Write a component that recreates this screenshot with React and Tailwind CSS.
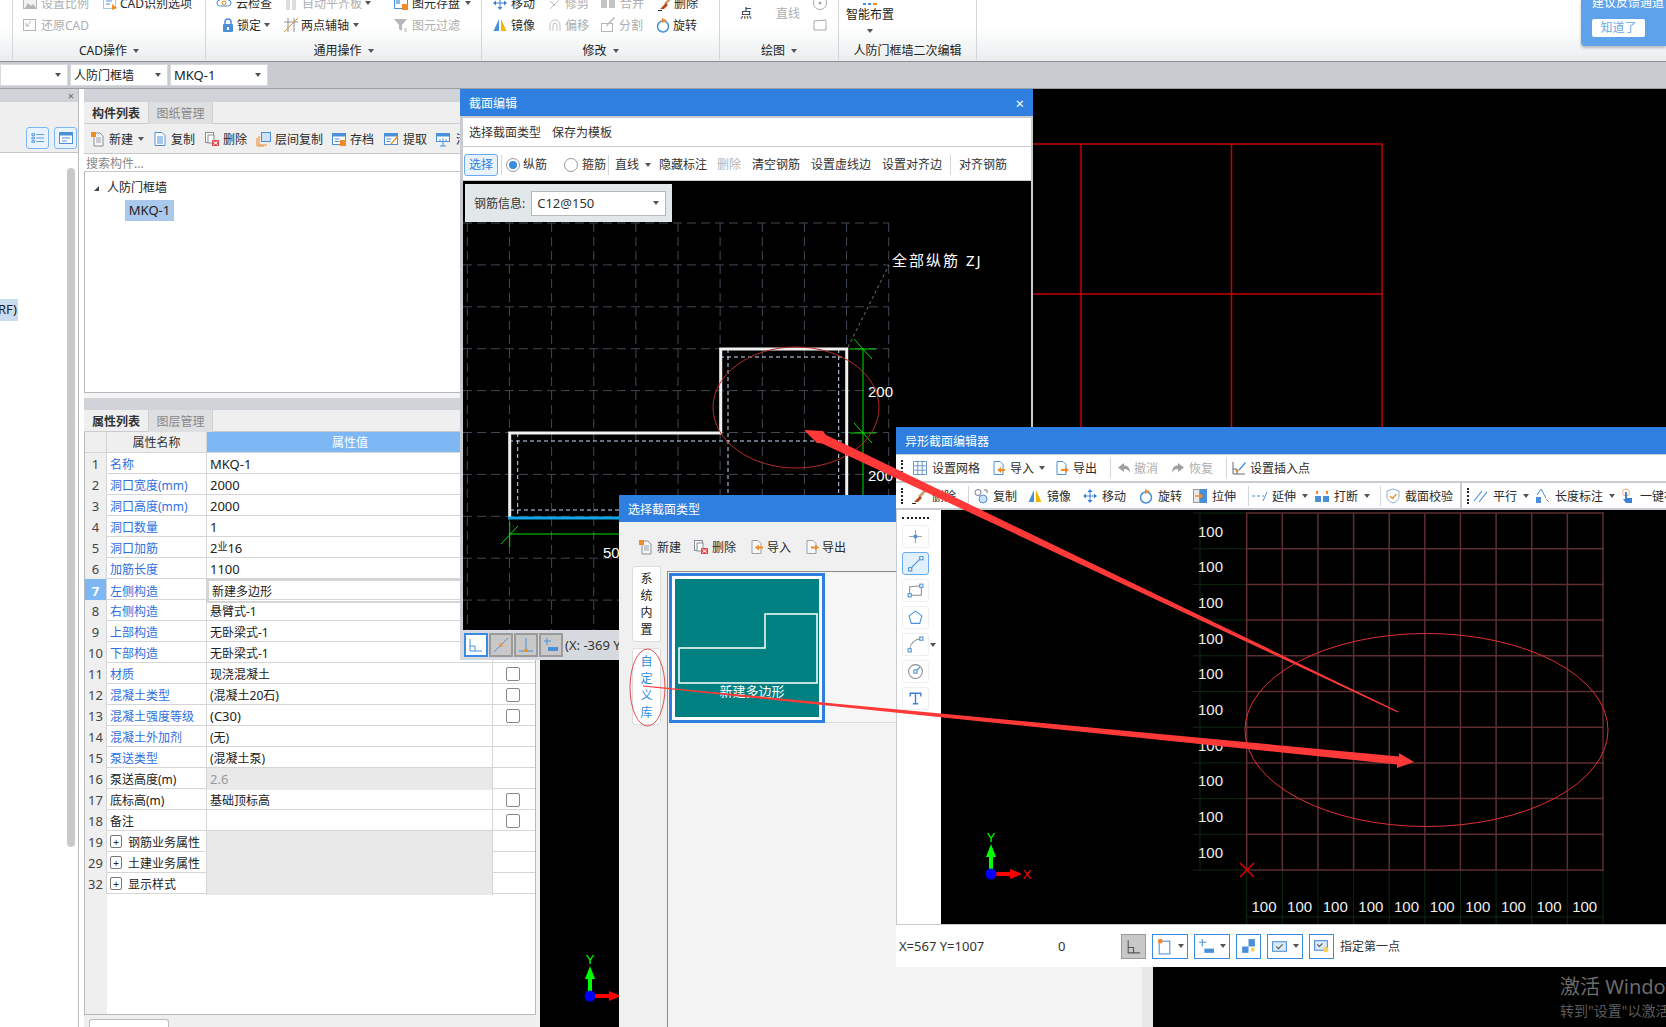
import React from 'react';

const BLUE = '#4a90d9';
const ORG = '#f08c28';

const ICONS = {
  new: <><path d="M4 2h6l3 3v10H4z" fill="#f6f7f8" stroke="#8a8f96" /><path d="M6 7h5M6 9h5M6 11h5" stroke="#9aa0a6" /><rect x="1" y="1" width="5" height="5" fill={ORG} /></>,
  copy: <><path d="M2 1.5h7l3 3v10H2z" fill="#fff" stroke={BLUE} /><path d="M4 6h6M4 8h6M4 10h6M4 12h6" stroke={BLUE} /></>,
  del: <><rect x="1.5" y="1.5" width="8" height="10" fill="#fff" stroke="#8a8f96" /><rect x="4" y="4" width="6" height="8" fill="#fff" stroke="#8a8f96" /><rect x="8" y="9" width="7" height="6" fill="#e05050" /><path d="M9.5 10.5l4 3m0-3l-4 3" stroke="#fff" /></>,
  layer: <><rect x="5.5" y="1.5" width="9" height="9" fill="#cfe2f7" stroke={BLUE} /><path d="M3 5v9h8" fill="none" stroke={ORG} /><path d="M1 7v8h7" fill="none" stroke={ORG} /></>,
  save: <><rect x="1.5" y="2.5" width="13" height="11" fill="#fff" stroke={BLUE} /><rect x="1.5" y="2.5" width="13" height="3" fill={BLUE} /><path d="M3.5 8h5M3.5 10.5h5" stroke={BLUE} /><rect x="9" y="9" width="6" height="6" fill={ORG} /></>,
  extract: <><rect x="1.5" y="2.5" width="13" height="11" fill="#fff" stroke={BLUE} /><rect x="1.5" y="2.5" width="13" height="3" fill={BLUE} /><path d="M3.5 8h5M3.5 10.5h4" stroke={BLUE} /><path d="M15 6l-6 7-2 1 1-2 6-7z" fill={ORG} /></>,
  clean: <><rect x="1.5" y="2.5" width="13" height="8" fill="#fff" stroke={BLUE} /><rect x="1.5" y="2.5" width="13" height="3" fill={BLUE} /><path d="M8 7v8M5 15h6M5 8v3M11 8v3" stroke={BLUE} /></>,
  imp: <><path d="M3 1.5h6l3 3v10H3z" fill="#fff" stroke={BLUE} /><path d="M6 10l4-3v2h4v2h-4v2z" fill={ORG} /></>,
  exp: <><path d="M3 1.5h6l3 3v10H3z" fill="#fff" stroke={BLUE} /><path d="M15 10l-4-3v2H7v2h4v2z" fill={ORG} /></>,
  imp2: <><path d="M3 1.5h6l3 3v10H3z" fill="#f6f7f8" stroke="#9aa0a6" /><path d="M6 8.5l4-3v2h4v2h-4v2z" fill={ORG} /></>,
  exp2: <><path d="M3 1.5h6l3 3v10H3z" fill="#f6f7f8" stroke="#9aa0a6" /><path d="M15 8.5l-4-3v2H7v2h4v2z" fill={ORG} /></>,
  grid: <path d="M1.5 1.5h13v13h-13zM1.5 5.8h13M1.5 10.2h13M5.8 1.5v13M10.2 1.5v13" fill="none" stroke="#6f9bc8" />,
  undo: <path d="M8 3L2 7.5l6 4.5V9c3 0 5 1 6 4 0-5-2-7.5-6-7.5z" fill="#a0a0a0" />,
  redo: <path d="M8 3l6 4.5-6 4.5V9c-3 0-5 1-6 4 0-5 2-7.5 6-7.5z" fill="#a0a0a0" />,
  insert: <><path d="M2 2v12h12M2 9h4M6 9v5" fill="none" stroke="#667" /><path d="M14 2l-6 7-1 2 2-1 6-7z" fill={BLUE} /><circle cx="6" cy="11" r="1.5" fill={ORG} /></>,
  broom: <><path d="M15 1L7 9" stroke="#c9a06a" strokeWidth="2.5" /><path d="M8 8l2 2-4 4-4 0z" fill="#b5471a" /><path d="M0 15.5h4" stroke="#222" /></>,
  copy2: <><circle cx="5" cy="4.5" r="3" fill="#fff" stroke="#778" /><circle cx="10" cy="11" r="4" fill="#cfe2f7" stroke={BLUE} /><path d="M11 2h3v3" fill="none" stroke="#778" /></>,
  mirror: <><path d="M7 2v12H1.5z" fill={BLUE} /><path d="M9 2v12h5.5z" fill="#f5b400" /></>,
  move: <path d="M8 1l2.5 3h-5zM8 15l2.5-3h-5zM1 8l3-2.5v5zM15 8l-3-2.5v5zM7.5 4h1v8h-1zM4 7.5h8v1H4z" fill="#3a80d8" />,
  rotate: <><circle cx="8" cy="9.5" r="5.5" fill="none" stroke={BLUE} strokeWidth="1.5" /><path d="M7 1l5 2.5L7 6z" fill={ORG} /></>,
  stretch: <><rect x="1.5" y="1.5" width="6" height="13" fill="#e8e8e8" stroke="#999" /><rect x="8" y="1" width="7" height="14" fill={BLUE} /><path d="M3 8h6M7 5.5L10 8l-3 2.5" fill="none" stroke={ORG} strokeWidth="1.5" /></>,
  extend: <path d="M0 8h3M5 8h3M10 8h2M11 13l4-9" fill="none" stroke={BLUE} />,
  brk: <><rect x="1" y="8" width="6" height="6" fill={BLUE} /><rect x="9" y="8" width="6" height="6" fill={BLUE} /><path d="M3 6V3M13 6V3" stroke={ORG} strokeWidth="2" /></>,
  shield: <><path d="M8 1l6 2v5c0 4-3 6-6 7-3-1-6-3-6-7V3z" fill="#fff" stroke="#8ab0d8" /><path d="M5 8l2.5 2.5L11.5 6" fill="none" stroke={ORG} strokeWidth="1.3" /></>,
  parallel: <path d="M1 13L9 3M6 14l8-10" stroke={BLUE} strokeWidth="1.2" />,
  length: <><path d="M6 1L2 7M6 1l5 9" stroke={BLUE} fill="none" /><rect x="1" y="9" width="5" height="6" fill={BLUE} /><path d="M11 11l3 3" stroke="#888" /></>,
  hand: <><circle cx="6" cy="4.5" r="3.5" fill="none" stroke="#f3a77a" /><path d="M5 4h2v6h5v5H6L3 11l2 0z" fill="#3a80d8" /></>,
  cloud: <><path d="M4 11a3 3 0 0 1 0-6 4 4 0 0 1 8 0 3 3 0 0 1 0 6z" fill="#fff" stroke={BLUE} /><circle cx="8" cy="8" r="2" fill="none" stroke={ORG} /></>,
  lock: <><path d="M5 8V5a3 3 0 0 1 6 0v3" fill="none" stroke={BLUE} strokeWidth="1.5" /><rect x="3" y="7" width="10" height="8" rx="1" fill={BLUE} /><rect x="7" y="10" width="2" height="3" fill="#fff" /></>,
  axis: <><path d="M5 1v14M11 1v14M1 5h14" stroke="#8a8f96" fill="none" /><path d="M1 15L15 1" stroke={ORG} /></>,
  flat: <><rect x="1" y="1" width="4" height="14" fill="#ddd" /><rect x="7" y="3" width="4" height="12" fill="#ddd" /></>,
  store: <><rect x="1.5" y="2.5" width="13" height="11" fill="#fff" stroke={BLUE} /><rect x="3" y="5" width="4" height="4" fill="#8ab8e8" /><rect x="9" y="9" width="6" height="6" fill={ORG} /></>,
  filter: <><path d="M1 2h13L9 8v6L6 12V8z" fill="#b8b8b8" /><path d="M11 12h3M11 14h3" stroke="#b8b8b8" /></>,
  scale: <><rect x="1.5" y="3.5" width="13" height="10" fill="#f2f2f2" stroke="#b5b5b5" /><path d="M3 13l3-5 3 3 2-2 3 4z" fill="#b5b5b5" /></>,
  cad: <><rect x="1.5" y="2.5" width="12" height="11" fill="#fff" stroke="#a8c4e4" /><path d="M4 6h6M4 9h4" stroke={BLUE} /><path d="M10 9l5 4-5 2z" fill={ORG} /></>,
  restore: <><rect x="1.5" y="2.5" width="12" height="11" fill="none" stroke="#b5b5b5" /><path d="M5 9l4-5M7 9H4V6" fill="none" stroke="#b5b5b5" /></>,
  trim: <path d="M2 14L14 2M2 6l5 5" stroke="#c0c0c0" fill="none" />,
  merge: <><rect x="1" y="4" width="6" height="9" fill="#c4c4c4" /><rect x="9" y="4" width="6" height="9" fill="#c4c4c4" /></>,
  offset: <path d="M3 14V8a5 5 0 0 1 10 0v6M6 14V8a2 2 0 0 1 4 0v6" fill="none" stroke="#c0c0c0" />,
  split: <><rect x="1.5" y="6.5" width="11" height="8" fill="none" stroke="#b5b5b5" /><path d="M15 1L8 8l-2 2 1-3 7-7z" fill="#b5b5b5" /></>,
};

const Ico = ({ n, className = 'w-[16px] h-[16px] shrink-0' }) => (
  <svg viewBox="0 0 16 16" className={className}>{ICONS[n]}</svg>
);

const Caret = ({ className = '' }) => (
  <span className={`inline-block w-0 h-0 border-x-[3.5px] border-x-transparent border-t-[4px] border-t-[#555] ${className}`} />
);

const Tool = ({ n, t, w = '', g = 'gap-[4px]', caret, gray }) => (
  <div className={`flex items-center shrink-0 ${g} ${w} ${gray ? 'text-[#aeaeae]' : 'text-[#2b2b2b]'}`}>
    {n && <Ico n={n} />}
    <span className="whitespace-nowrap pt-[2px]">{t}</span>
    {caret && <Caret className="ml-[2px]" />}
  </div>
);

const Sep = ({ w = 'w-[9px]' }) => (
  <div className={`${w} shrink-0 flex justify-center`}>
    <div className="w-px h-[20px] bg-[#d4d7da]" />
  </div>
);

const Grip = ({ w = 'w-[16px]' }) => (
  <div className={`${w} shrink-0 pl-[5px]`}>
    <div className="w-[2px] h-[16px] border-l-2 border-dotted border-[#222]" />
  </div>
);

const RibbonGroup = ({ w, label, noCaret, children }) => (
  <div className={`${w} shrink-0 h-[60px] border-r border-[#d2d6d9] overflow-hidden`}>
    <div className="h-[44px] -mt-[8px]">{children}</div>
    <div className="h-[30px] flex items-center justify-center gap-[6px] text-[#222]">
      <span className="whitespace-nowrap">{label}</span>
      {!noCaret && <Caret />}
    </div>
  </div>
);

const RibRow = ({ pad, children }) => <div className={`h-[22px] flex items-center ${pad}`}>{children}</div>;

const Ribbon = () => (
  <div className="relative h-[62px] shrink-0 flex border-b border-[#8a8f93] bg-gradient-to-b from-white from-[45%] to-[#eaedee]">
    <div className="w-[13px] h-[60px] border-r border-[#d2d6d9] shrink-0" />
    <RibbonGroup w="w-[193px]" label="CAD操作">
      <RibRow pad="pl-[9px]"><Tool n="scale" t="设置比例" w="w-[80px]" g="gap-[3px]" gray /><Tool n="cad" t="CAD识别选项" g="gap-[2px]" /></RibRow>
      <RibRow pad="pl-[9px]"><Tool n="restore" t="还原CAD" g="gap-[3px]" gray /></RibRow>
    </RibbonGroup>
    <RibbonGroup w="w-[276px]" label="通用操作">
      <RibRow pad="pl-[10px]"><Tool n="cloud" t="云检查" w="w-[69px]" /><Tool n="flat" t="自动平齐板" w="w-[108px]" g="gap-[1px]" gray caret /><Tool n="store" t="图元存盘" g="gap-[3px]" caret /></RibRow>
      <RibRow pad="pl-[14px]"><Tool n="lock" t="锁定" w="w-[63px]" g="gap-[1px]" caret /><Tool n="axis" t="两点辅轴" w="w-[110px]" g="gap-[2px]" caret /><Tool n="filter" t="图元过滤" g="gap-[3px]" gray /></RibRow>
    </RibbonGroup>
    <RibbonGroup w="w-[238px]" label="修改">
      <RibRow pad="pl-[10px]"><Tool n="move" t="移动" w="w-[56px]" g="gap-[3px]" /><Tool n="trim" t="修剪" w="w-[52px]" g="gap-[1px]" gray /><Tool n="merge" t="合并" w="w-[58px]" g="gap-[4px]" gray /><Tool n="broom" t="删除" g="gap-0" /></RibRow>
      <RibRow pad="pl-[10px]"><Tool n="mirror" t="镜像" w="w-[55px]" g="gap-[3px]" /><Tool n="offset" t="偏移" w="w-[53px]" g="gap-[2px]" gray /><Tool n="split" t="分割" w="w-[55px]" g="gap-[3px]" gray /><Tool n="rotate" t="旋转" g="gap-[2px]" /></RibRow>
    </RibbonGroup>
    <RibbonGroup w="w-[119px]" label="绘图">
      <div className="h-[44px] flex items-center pl-[20px]">
        <span className="w-[36px] text-[#222]">点</span>
        <span className="w-[36px] text-[#aeaeae]">直线</span>
        <div className="flex flex-col gap-[6px]">
          <svg viewBox="0 0 16 16" className="w-[16px] h-[16px]"><circle cx="8" cy="8" r="6.5" fill="none" stroke="#aaa" /><circle cx="8" cy="8" r="1.5" fill="#aaa" /></svg>
          <svg viewBox="0 0 16 16" className="w-[16px] h-[16px]"><path d="M2 4l12-1v10H2z" fill="none" stroke="#aaa" /></svg>
        </div>
      </div>
    </RibbonGroup>
    <RibbonGroup w="w-[138px]" label="人防门框墙二次编辑" noCaret>
      <div className="h-[44px] flex flex-col pl-[7px] pt-[11px]">
        <div className="h-[2px] w-[48px] flex justify-center gap-[2px]"><span className="w-[3px] h-[2px] bg-[#4a90d9]" /><span className="w-[3px] h-[2px] bg-[#4a90d9]" /><span className="w-[4px] h-[2px] bg-[#f08c28]" /></div>
        <span className="h-[20px] leading-[20px] text-[#222]">智能布置</span>
        <div className="w-[48px] flex justify-center mt-[4px]"><Caret /></div>
      </div>
    </RibbonGroup>
    <div className="absolute right-0 top-0 w-[85px] h-[46px] bg-[#5fa2ec] rounded-bl-[4px] shadow-[0_2px_3px_rgba(0,0,0,0.25)] pl-[11px] overflow-hidden">
      <div className="text-white whitespace-nowrap leading-[12px] -mt-[3px]">建议反馈通道</div>
      <div className="mt-[10px] w-[53px] h-[18px] rounded-[2px] bg-white text-[#6aa8ec] flex items-center justify-center">知道了</div>
    </div>
  </div>
);

const Combo = ({ w, t }) => (
  <div className={`${w} h-[22px] bg-white flex items-center justify-between pl-[3px] pr-[6px] text-[#222] border border-[#d8dadd]`}>
    <span className="whitespace-nowrap pt-[2px]">{t}</span>
    <Caret />
  </div>
);

const TopBar = () => (
  <div className="h-[27px] shrink-0 bg-[#c8ccd1] border-b border-[#999ea3] flex items-center gap-[2px]">
    <Combo w="w-[68px]" t="" />
    <Combo w="w-[98px]" t="人防门框墙" />
    <Combo w="w-[98px]" t={<span className="text-[13px]">MKQ-1</span>} />
  </div>
);

const LeftPanel = () => (
  <div className="w-[78px] shrink-0 flex flex-col bg-white">
    <div className="h-[13px] bg-[#d0d3d8] flex items-center justify-end pr-[4px] text-[#666] text-[11px] leading-none">×</div>
    <div className="h-[22px] bg-[#efefef]" />
    <div className="h-[29px] bg-[#efefef] border-b border-[#c4c6c8] flex items-center justify-end gap-[5px] pr-[1px]">
      <div className="w-[23px] h-[22px] border border-[#7cb6f2] rounded-[3px] bg-[#e9f3fd] flex items-center justify-center">
        <svg viewBox="0 0 16 16" className="w-[14px] h-[14px]"><path d="M1 3h3v2H1zM1 7h3v2H1zM1 11h3v2H1z" fill="none" stroke={BLUE} /><path d="M6 4h9M6 8h9M6 12h9" stroke={BLUE} /></svg>
      </div>
      <div className="w-[23px] h-[22px] border border-[#7cb6f2] rounded-[3px] bg-[#e9f3fd] flex items-center justify-center">
        <svg viewBox="0 0 16 16" className="w-[16px] h-[16px]"><rect x="1.5" y="2.5" width="13" height="11" fill="#fff" stroke={BLUE} /><rect x="1.5" y="2.5" width="13" height="3" fill={BLUE} /><path d="M4 8h8M4 11h5" stroke={BLUE} /></svg>
      </div>
    </div>
    <div className="flex-1 flex">
      <div className="w-[67px] pt-[146px]">
        <div className="w-[18px] h-[22px] bg-[#c9dcf0] text-[#222] flex items-center overflow-hidden"><span className="-ml-[2px] text-[13px]">RF)</span></div>
      </div>
      <div className="w-[8px] h-[679px] mt-[15px] bg-[#c9c9c9] rounded-[4px]" />
    </div>
  </div>
);

const PanelTabs = ({ a, b }) => (
  <div className="h-[22px] bg-[#efefef] flex border-b border-[#c9cbcd]">
    <div className="w-[64px] h-[22px] pt-[2px] flex items-center justify-center font-semibold text-[#333]">{a}</div>
    <div className="w-[65px] h-[22px] pt-[2px] bg-[#dedfe1] flex items-center justify-center text-[#888] border-l border-r border-[#cfd1d3]">{b}</div>
  </div>
);

const LIST_TOOLS = [
  { n: 'new', t: '新建', w: 'w-[63px]', g: 'gap-[3px]', caret: true },
  { n: 'copy', t: '复制', w: 'w-[51px]', g: 'gap-[2px]' },
  { n: 'del', t: '删除', w: 'w-[52px]', g: 'gap-[3px]' },
  { n: 'layer', t: '层间复制', w: 'w-[75px]', g: 'gap-[3px]' },
  { n: 'save', t: '存档', w: 'w-[52px]', g: 'gap-[3px]' },
  { n: 'extract', t: '提取', w: 'w-[52px]', g: 'gap-[4px]' },
  { n: 'clean', t: '清空', w: 'w-[60px]', g: 'gap-[5px]' },
];

const rebar = <>2<span className="text-[10px] -mt-[4px]">业</span>16</>;

const ROWS = [
  ['1', '名称', 'MKQ-1', 0, 1], ['2', '洞口宽度(mm)', '2000', 0, 1], ['3', '洞口高度(mm)', '2000', 0, 1],
  ['4', '洞口数量', '1', 0, 1], ['5', '洞口加筋', rebar, 0, 1], ['6', '加筋长度', '1100', 0, 1],
  ['7', '左侧构造', '新建多边形', 0, 1], ['8', '右侧构造', '悬臂式-1', 0, 1], ['9', '上部构造', '无卧梁式-1', 0, 1],
  ['10', '下部构造', '无卧梁式-1', 0, 1], ['11', '材质', '现浇混凝土', 1, 1], ['12', '混凝土类型', '(混凝土20石)', 1, 1],
  ['13', '混凝土强度等级', '(C30)', 1, 1], ['14', '混凝土外加剂', '(无)', 0, 1], ['15', '泵送类型', '(混凝土泵)', 0, 1],
  ['16', '泵送高度(m)', '2.6', 0, 0], ['17', '底标高(m)', '基础顶标高', 1, 0], ['18', '备注', '', 1, 0],
];

const GROUPS = [['19', '钢筋业务属性'], ['29', '土建业务属性'], ['32', '显示样式']];

const Row = ({ r }) => {
  const [idx, name, value, check, link] = r;
  const sel = idx === '7';
  const off = idx === '16';
  const latin = typeof value === 'string' && /^[\x20-\x7e]*$/.test(value);
  return (
    <div className="grid grid-cols-[22px_100px_286px_41px] h-[21px] border-b border-[#d5d5d5]">
      <div className={`flex items-center justify-center text-[13px] pt-[2px] border-r border-[#d5d5d5] ${sel ? 'bg-[#7db8f5] text-white font-bold' : 'bg-[#efefef] text-[#444]'}`}>{idx}</div>
      <div className={`flex items-center pl-[3px] pt-[2px] border-r border-[#d5d5d5] whitespace-nowrap ${link ? 'text-[#2f6fe0]' : 'text-[#222]'}`}>{name}</div>
      <div className={`flex items-center pl-[3px] pt-[2px] border-r border-[#d5d5d5] whitespace-nowrap ${latin || typeof value !== 'string' ? 'text-[13px]' : ''} ${sel ? 'border-2 border-[#808080] pl-[2px]' : ''} ${off ? 'bg-[#e9e9e9] text-[#999]' : 'text-[#222]'}`}>{value}</div>
      <div className="flex items-center justify-center pr-[2px]">
        {check ? <div className="w-[14px] h-[14px] rounded-[2px] border border-[#888]" /> : null}
      </div>
    </div>
  );
};

const MidPanel = () => (
  <div className="w-[452px] shrink-0 flex flex-col bg-[#f4f4f4]">
    <div className="h-[13px] bg-[#d0d3d8]" />
    <PanelTabs a="构件列表" b="图纸管理" />
    <div className="h-[29px] bg-[#efefef] flex items-center pl-[6px] overflow-hidden">
      {LIST_TOOLS.map((x) => <Tool key={x.t} {...x} />)}
    </div>
    <div className="h-[19px] bg-white border-y border-[#c4c6c8] pl-[2px] pt-[2px] flex items-center text-[#888]">搜索构件...</div>
    <div className="h-[221px] bg-white border-x border-b border-[#b5b7b9] pt-[6px]">
      <div className="flex items-center h-[20px] text-[#222]">
        <span className="ml-[9px] mr-[5px] w-0 h-0 border-l-[5px] border-l-transparent border-b-[5px] border-b-[#444]" />
        <span className="ml-[3px]">人防门框墙</span>
      </div>
      <div className="ml-[40px] mt-[2px] w-[49px] h-[21px] bg-[#a9c8ec] flex items-center justify-center text-[#222] text-[13px]">MKQ-1</div>
    </div>
    <div className="h-[5px]" />
    <div className="h-[12px] bg-[#d0d3d8]" />
    <PanelTabs a="属性列表" b="图层管理" />
    <div className="flex-1 flex flex-col bg-white border-x border-b border-[#b5b7b9]">
      <div className="grid grid-cols-[22px_100px_286px_41px] h-[21px] border-b border-[#d5d5d5]">
        <div className="bg-[#efefef] border-r border-[#d5d5d5]" />
        <div className="bg-[#efefef] flex items-center justify-center pt-[2px] border-r border-[#d5d5d5] text-[#333]">属性名称</div>
        <div className="bg-[#7db8f5] flex items-center justify-center pt-[2px] text-white">属性值</div>
        <div className="bg-[#7db8f5]" />
      </div>
      {ROWS.map((r) => <Row key={r[0]} r={r} />)}
      {GROUPS.map(([i, t]) => (
        <div key={i} className="grid grid-cols-[22px_100px_286px_41px] h-[21px] border-b border-[#d5d5d5]">
          <div className="bg-[#efefef] flex items-center justify-center pt-[2px] text-[13px] border-r border-[#d5d5d5] text-[#444]">{i}</div>
          <div className="flex items-center pl-[3px] gap-[6px] border-r border-[#d5d5d5] text-[#222] whitespace-nowrap">
            <span className="w-[12px] h-[13px] border border-[#777] rounded-[2px] flex items-center justify-center text-[10px] leading-none">+</span>
            <span className="pt-[2px]">{t}</span>
          </div>
          <div className="bg-[#e9e9e9] border-r border-[#d5d5d5]" />
          <div />
        </div>
      ))}
      <div className="flex-1 flex"><div className="w-[22px] bg-[#efefef]" /></div>
    </div>
    <div className="h-[12px] bg-[#efefef] pl-[5px] pt-[4px]">
      <div className="w-[80px] h-[8px] bg-white border border-b-0 border-[#bbb] rounded-t-[3px]" />
    </div>
  </div>
);

// little axis marker used on all the black canvases
const Axis = ({ x, y, showX = true }) => (
  <g>
    <path d={`M${x} ${y}V${y - 22}`} stroke="#00ff00" strokeWidth="4" />
    <path d={`M${x} ${y - 30}l-5 13h10z`} fill="#00ff00" />
    <path d={`M${x} ${y}h22`} stroke="#ff0000" strokeWidth="4" />
    <path d={`M${x + 31} ${y}l-12 -5v10z`} fill="#ff0000" />
    <circle cx={x} cy={y} r="5.5" fill="#0000ff" />
    <text x={x} y={y - 32} textAnchor="middle" fontSize="13" fill="#00ff00" fontFamily="Liberation Sans">Y</text>
    {showX && <text x={x + 36} y={y + 5} textAnchor="middle" fontSize="13" fill="#ff0000" fontFamily="Liberation Sans">X</text>}
  </g>
);

const BackCanvas = () => (
  <svg viewBox="540 89 1126 938" className="flex-1 h-full bg-black block">
    <path d="M1033 144H1382V430M1081 144V430M1231.5 144V430M1033 294H1382" fill="none" stroke="#c80000" strokeWidth="1.5" />
    <Axis x={590} y={996} showX={false} />
    <text x="1560" y="994" fontSize="20" fill="#6b6b6b">激活 Windows</text>
    <text x="1560" y="1016" fontSize="14" fill="#5c5c5c">转到"设置"以激活 Windows。</text>
  </svg>
);

const GX = Array.from({ length: 11 }, (_, i) => 467.3 + 42.14 * i);
const GY = Array.from({ length: 10 }, (_, i) => 223 + 41.9 * i);

const SectionCanvas = () => (
  <svg viewBox="463 181 568 449" className="w-[568px] h-[449px] bg-black block">
    {GX.map((x) => <path key={x} d={`M${x} 223V630`} stroke="#414856" strokeDasharray="9 5" />)}
    {GY.map((y) => <path key={y} d={`M463 ${y}H889`} stroke="#414856" strokeDasharray="9 5" />)}
    <path d="M848 347L889 265" stroke="#777" strokeDasharray="3 3" />
    <path d="M728 349V630M838.7 349V630M720 357H842M509 441H848M517.7 433V518M510 510H850" fill="none" stroke="#c8dcf8" strokeDasharray="4 3" />
    <path d="M509.7 518V433H720.7V349H846.7V630" fill="none" stroke="#f0f0f0" strokeWidth="3" />
    <path d="M508 518H848" stroke="#12a5e8" strokeWidth="3" />
    <path d="M863 349V630M850 349H876M850 433H876M854 339l18 20M854 423l18 20M509.7 534H863M509.7 522V547M501 544l17 -18" fill="none" stroke="#00e000" />
    <text x="892" y="266" fontSize="15" letterSpacing="2" fill="#fff">全部纵筋 ZJ</text>
    <text x="868" y="397" fontSize="15" fill="#fff" fontFamily="Liberation Sans">200</text>
    <text x="868" y="481" fontSize="15" fill="#fff" fontFamily="Liberation Sans">200</text>
    <text x="603" y="558" fontSize="15" fill="#fff" fontFamily="Liberation Sans">500</text>
  </svg>
);

const StatBtn = ({ children, on }) => (
  <div className={`w-[24px] h-[24px] flex items-center justify-center ${on ? 'bg-white border-2 border-[#3a8be0]' : 'bg-[#c8c8c8] border-2 border-[#9a9a9a]'}`}>{children}</div>
);

const SectionDialog = () => (
  <div className="absolute left-[460px] top-[89px] w-[573px] h-[571px] z-10 bg-[#c8ccd1] flex flex-col">
    <div className="h-[27px] pt-[2px] bg-[#2e7fe0] text-white flex items-center justify-between pl-[9px] pr-[9px]">
      <span>截面编辑</span>
      <span className="text-[15px] leading-none">×</span>
    </div>
    <div className="mt-[2px] ml-[3px] mr-[2px] h-[28px] pt-[2px] bg-white flex items-center gap-[11px] pl-[6px] text-[#333]">
      <span>选择截面类型</span>
      <span>保存为模板</span>
    </div>
    <div className="mt-[1px] ml-[3px] mr-[2px] h-[33px] pt-[2px] bg-white flex items-center text-[#333]">
      <div className="ml-[1px] w-[34px] h-[22px] border border-[#6aaaf0] bg-[#e9f3fd] rounded-[3px] text-[#2f7fe0] flex items-center justify-center">选择</div>
      <Sep w="w-[6px]" />
      <span className="ml-[2px] w-[14px] h-[14px] rounded-full border border-[#999] flex items-center justify-center"><span className="w-[8px] h-[8px] rounded-full bg-[#3a8be0]" /></span>
      <span className="ml-[3px] w-[41px]">纵筋</span>
      <span className="w-[14px] h-[14px] rounded-full border border-[#999]" />
      <span className="ml-[4px]">箍筋</span>
      <Sep w="w-[5px]" />
      <span className="ml-[4px]">直线</span>
      <Caret className="ml-[6px]" />
      <span className="ml-[8px]">隐藏标注</span>
      <span className="ml-[10px] text-[#b5b5b5]">删除</span>
      <span className="ml-[11px]">清空钢筋</span>
      <span className="ml-[11px]">设置虚线边</span>
      <span className="ml-[11px]">设置对齐边</span>
      <Sep w="w-[17px]" />
      <span>对齐钢筋</span>
    </div>
    <div className="relative mt-[1px] ml-[3px]">
      <SectionCanvas />
      <div className="absolute left-[2px] top-[3px] w-[207px] h-[38px] bg-[#e2e8ea] flex items-center pl-[9px] gap-[6px] text-[#333]">
        <span className="whitespace-nowrap pt-[2px]">钢筋信息:</span>
        <div className="w-[135px] h-[25px] bg-white border border-[#b5b9bc] flex items-center justify-between pl-[5px] pr-[6px]">
          <span className="text-[13px] pt-[2px]">C12@150</span>
          <Caret />
        </div>
      </div>
    </div>
    <div className="flex-1 bg-[#d6dade] flex items-center gap-[1px] pl-[4px] text-[#333]">
      <StatBtn on><svg viewBox="0 0 16 16" className="w-[16px] h-[16px]"><path d="M2 2v12h12M2 9h5v5" fill="none" stroke={BLUE} /></svg></StatBtn>
      <StatBtn><svg viewBox="0 0 16 16" className="w-[16px] h-[16px]"><path d="M1 15L15 1" stroke={BLUE} /><rect x="6.5" y="6.5" width="3" height="3" fill={ORG} /></svg></StatBtn>
      <StatBtn><svg viewBox="0 0 16 16" className="w-[16px] h-[16px]"><path d="M8 1v13M1 14h14" stroke={BLUE} /><rect x="6.5" y="12" width="3" height="3" fill={ORG} /></svg></StatBtn>
      <StatBtn><svg viewBox="0 0 16 16" className="w-[16px] h-[16px]"><path d="M4 1v7M1 4h7" stroke={BLUE} /><rect x="5" y="10" width="10" height="4" fill={BLUE} /></svg></StatBtn>
      <span className="ml-[1px] whitespace-nowrap text-[13px] pt-[2px]">(X: -369 Y: 1007)</span>
    </div>
  </div>
);

const SideTab = ({ t, on, h }) => (
  <div className={`w-[29px] ${h} bg-white border border-[#dcdcdc] rounded-[3px] flex flex-col items-center justify-center leading-[17px] ${on ? 'text-[#2e8de0]' : 'text-[#222]'}`}>
    {t.split('').map((c) => <span key={c}>{c}</span>)}
  </div>
);

const TypeDialog = () => (
  <div className="absolute left-[619px] top-[495px] w-[534px] h-[532px] z-20 bg-[#f0f0f0] flex flex-col border-r-[11px] border-[#e8e8e8]">
    <div className="h-[27px] pt-[2px] bg-[#2e7fe0] text-white flex items-center pl-[9px]">选择截面类型</div>
    <div className="h-[49px] flex items-center pl-[19px] pt-[1px]">
      <Tool n="new" t="新建" w="w-[55px]" g="gap-[3px]" />
      <Tool n="del" t="删除" w="w-[56px]" g="gap-[3px]" />
      <Tool n="imp2" t="导入" w="w-[55px]" g="gap-[2px]" />
      <Tool n="exp2" t="导出" g="gap-[2px]" />
    </div>
    <div className="flex-1 flex">
      <div className="w-[48px] pl-[13px] flex flex-col gap-[6px] shrink-0">
        <SideTab t="系统内置" h="h-[76px] -mt-[5px]" />
        <SideTab t="自定义库" h="h-[77px]" on />
      </div>
      <div className="flex-1 bg-[#f3f3f3] border-l border-t border-[#8b8b8b] pt-[1px] pl-[1px]">
        <div className="h-[150px] bg-[#f6f6f6] border-b border-[#dedede]">
          <div className="w-[156px] h-[150px] border-[3px] border-[#2e7fe0] bg-white p-[3px]">
            <div className="h-full bg-[#008080]">
              <svg viewBox="675 579 143 138" className="w-[143px] h-[138px] block">
                <path d="M679 648H765V614H817V683H679z" fill="none" stroke="#fff" strokeWidth="1.5" />
                <text x="752" y="696" textAnchor="middle" fontSize="13" fill="#fff">新建多边形</text>
              </svg>
            </div>
          </div>
        </div>
      </div>
    </div>
  </div>
);

const COLS = Array.from({ length: 11 }, (_, i) => 1246.7 + 35.63 * i);
const LINES = Array.from({ length: 11 }, (_, i) => 513 + 35.7 * i);
const LABEL_Y = Array.from({ length: 10 }, (_, i) => 536.5 + 35.7 * i);
const LABEL_X = Array.from({ length: 10 }, (_, i) => 1264 + 35.63 * i);

const ShapeCanvas = () => (
  <svg viewBox="941 510 725 414" className="w-[725px] h-[414px] bg-black block shrink-0">
    {COLS.map((x) => <path key={x} d={`M${x} 870V924`} stroke="#0c2a10" />)}
    {LINES.map((y) => <path key={y} d={`M1193 ${y}H1246`} stroke="#0c2a10" />)}
    <path d="M1200 513V870M1246 917H1604" stroke="#0c2a10" />
    {COLS.map((x) => <path key={x} d={`M${x} 513V870`} stroke="#5e2e32" strokeWidth="1.5" />)}
    {LINES.map((y) => <path key={y} d={`M1246 ${y}H1604`} stroke="#5e2e32" strokeWidth="1.5" />)}
    <path d="M1240 863l14 14M1254 863l-14 14" stroke="#e00000" strokeWidth="1.5" />
    {LABEL_Y.map((y) => <text key={y} x="1210.5" y={y} textAnchor="middle" fontSize="15" fill="#eee" fontFamily="Liberation Sans">100</text>)}
    {LABEL_X.map((x) => <text key={x} x={x} y="911.5" textAnchor="middle" fontSize="15" fill="#eee" fontFamily="Liberation Sans">100</text>)}
    <Axis x={991} y={874} />
  </svg>
);

const SideTool = ({ on, caret, children }) => (
  <div className="flex items-center gap-[1px]">
    <div className={`w-[27px] h-[23px] rounded-[3px] flex items-center justify-center border ${on ? 'bg-[#e2effc] border-[#6aaaf0]' : 'bg-white border-[#efefef]'}`}>
      <svg viewBox="0 0 16 16" className="w-[17px] h-[17px]">{children}</svg>
    </div>
    {caret && <Caret />}
  </div>
);

const BarBtn = ({ w = 'w-[25px]', gray, caret, children }) => (
  <div className={`${w} h-[25px] border flex items-center justify-between px-[3px] shrink-0 ${gray ? 'bg-[#c8c8c8] border-[#9a9a9a]' : 'bg-white border-[#3a8be0]'}`}>
    <svg viewBox="0 0 16 16" className="w-[17px] h-[17px]">{children}</svg>
    {caret && <Caret />}
  </div>
);

const ShapeDialog = () => (
  <div className="absolute left-[896px] top-[427px] w-[770px] h-[540px] z-30 bg-[#c8ccd1] flex flex-col">
    <div className="h-[27px] pt-[2px] bg-[#2e7fe0] text-white flex items-center pl-[9px]">异形截面编辑器</div>
    <div className="mt-[1px] h-[26px] bg-white flex items-center">
      <Grip />
      <Tool n="grid" t="设置网格" w="w-[79px]" />
      <Tool n="imp" t="导入" w="w-[63px]" g="gap-[3px]" caret />
      <Tool n="exp" t="导出" w="w-[51px]" g="gap-[3px]" />
      <Sep w="w-[11px]" />
      <Tool n="undo" t="撤消" w="w-[54px]" g="gap-[2px]" gray />
      <Tool n="redo" t="恢复" w="w-[52px]" g="gap-[3px]" gray />
      <Sep />
      <Tool n="insert" t="设置插入点" g="gap-[3px]" />
    </div>
    <div className="mt-[2px] h-[25px] bg-white flex items-center">
      <Grip />
      <Tool n="broom" t="删除" w="w-[52px]" />
      <Sep />
      <Tool n="copy2" t="复制" w="w-[54px]" />
      <Tool n="mirror" t="镜像" w="w-[55px]" />
      <Tool n="move" t="移动" w="w-[56px]" />
      <Tool n="rotate" t="旋转" w="w-[54px]" />
      <Tool n="stretch" t="拉伸" w="w-[53px]" />
      <Sep w="w-[7px]" />
      <Tool n="extend" t="延伸" w="w-[62px]" caret />
      <Tool n="brk" t="打断" w="w-[62px]" caret />
      <Sep />
      <Tool n="shield" t="截面校验" w="w-[75px]" />
      <div className="w-[2px] h-[25px] bg-[#c8ccd1] shrink-0" />
      <Grip w="w-[11px]" />
      <Tool n="parallel" t="平行" w="w-[62px]" caret />
      <Tool n="length" t="长度标注" w="w-[85px]" caret />
      <Tool n="hand" t="一键布置" />
    </div>
    <div className="mt-[2px] h-[414px] flex">
      <div className="w-[45px] bg-white flex flex-col items-start pl-[5px] gap-[4px] border-l border-[#c8ccd1] shrink-0">
        <div className="w-[27px] h-[7px] mt-[4px] border-t-2 border-dotted border-[#222] translate-y-[3px]" />
        <SideTool><path d="M8 2v4M8 10v4M2 8h4M10 8h4" stroke="#9aa0a6" /><circle cx="8" cy="8" r="2" fill={BLUE} /></SideTool>
        <SideTool on><path d="M3 13L13 3" stroke={BLUE} /><rect x="1.5" y="12" width="3" height="3" fill="#fff" stroke={BLUE} /><rect x="12" y="1.5" width="3" height="3" fill="#fff" stroke={BLUE} /></SideTool>
        <SideTool><path d="M2.5 4.5l11-1v9h-11z" fill="none" stroke="#8a8f96" /><rect x="1" y="11" width="3" height="3" fill="#fff" stroke={BLUE} /><rect x="12" y="2" width="3" height="3" fill="#fff" stroke={BLUE} /></SideTool>
        <SideTool><path d="M8 2l6 4.5-2 7H4l-2-7z" fill="none" stroke={BLUE} /></SideTool>
        <SideTool caret><path d="M2.5 13C3 7 7 3 13 2.5" fill="none" stroke="#8a8f96" /><rect x="1" y="12" width="3" height="3" fill="#fff" stroke={BLUE} /><rect x="12" y="1" width="3" height="3" fill="#fff" stroke={BLUE} /></SideTool>
        <SideTool><circle cx="8" cy="8" r="6.5" fill="none" stroke="#8a8f96" /><path d="M8 8l4-4" stroke={BLUE} /><rect x="6.5" y="6.5" width="3" height="3" fill="#fff" stroke={BLUE} /></SideTool>
        <SideTool><path d="M3 6V3h10v3M8 3v10M5.5 13h5" fill="none" stroke="#3a80d8" strokeWidth="1.3" /></SideTool>
      </div>
      <ShapeCanvas />
    </div>
    <div className="flex-1 bg-white border-t border-[#c8ccd1] flex items-center pl-[3px] text-[#333]">
      <span className="w-[159px] whitespace-nowrap text-[13px] pt-[2px]">X=567 Y=1007</span>
      <span className="w-[63px] text-[13px] pt-[2px]">0</span>
      <div className="flex gap-[6px]">
        <BarBtn gray><path d="M3 2v12h11M3 9h5v5" fill="none" stroke="#555" /></BarBtn>
        <BarBtn w="w-[36px]" caret><rect x="3" y="3" width="10" height="12" fill="#fff" stroke={BLUE} /><rect x="2" y="1" width="4" height="4" fill={ORG} /></BarBtn>
        <BarBtn w="w-[36px]" caret><path d="M4 1v7M1 4h7" stroke={BLUE} /><rect x="6" y="10" width="9" height="4" fill={BLUE} /></BarBtn>
        <BarBtn><rect x="8" y="1" width="6" height="7" fill={BLUE} /><rect x="2" y="8" width="6" height="6" fill={BLUE} /><circle cx="12" cy="11" r="2" fill="#f5d060" /></BarBtn>
        <BarBtn w="w-[36px]" caret><rect x="1.5" y="3.5" width="13" height="9" fill="#dbe9f8" stroke={BLUE} /><path d="M5 8l2 2 4-4" fill="none" stroke="#555" /></BarBtn>
        <BarBtn><rect x="1.5" y="2.5" width="12" height="9" fill="#dbe9f8" stroke={BLUE} /><path d="M4 6l2 2 3-3" fill="none" stroke="#555" /><circle cx="12" cy="11" r="2.5" fill="#f5d060" /></BarBtn>
      </div>
      <span className="ml-[6px] whitespace-nowrap pt-[2px]">指定第一点</span>
    </div>
  </div>
);

const RED = '#ff3838';

// the hand drawn red notes sit on top of every window
const Notes = () => (
  <svg viewBox="0 0 1666 1027" className="absolute inset-0 w-[1666px] h-[1027px] z-40 pointer-events-none">
    <ellipse cx="796" cy="407.5" rx="83" ry="60.5" fill="none" stroke="#b52a2a" />
    <ellipse cx="647.5" cy="687.5" rx="17.5" ry="38.5" fill="none" stroke="#e05050" />
    <ellipse cx="1426.5" cy="730" rx="181.5" ry="96.5" fill="none" stroke="#e03030" />
    <polygon points="804,430 823,431 826,435 1398.4,711.4 1397.8,712.6 822,443.5 817,443" fill={RED} />
    <polygon points="643,685.5 1399,756.5 1399,753 1414,762 1397,768 1397,764.5 643,686.5" fill={RED} />
  </svg>
);

export default function App() {
  return (
    <div className="relative w-[1666px] h-[1027px] overflow-hidden bg-white flex flex-col text-[12px] font-['Noto_Sans','Noto_Sans_CJK_SC',sans-serif]">
      <Ribbon />
      <TopBar />
      <div className="flex-1 flex min-h-0">
        <LeftPanel />
        <div className="w-[6px] shrink-0 border-l border-[#b8babc] bg-white" />
        <MidPanel />
        <div className="w-[4px] shrink-0 bg-[#f0f0f0]" />
        <BackCanvas />
      </div>
      <SectionDialog />
      <TypeDialog />
      <ShapeDialog />
      <Notes />
    </div>
  );
}
